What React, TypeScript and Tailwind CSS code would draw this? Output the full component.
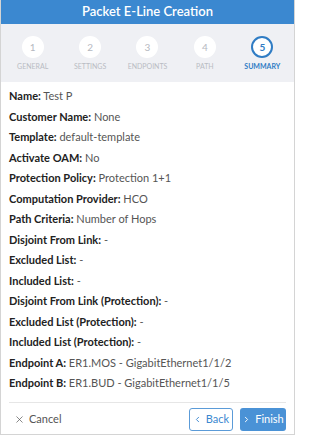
import { X, ChevronLeft, ChevronRight } from 'lucide-react'

const steps = ['General', 'Settings', 'Endpoints', 'Path', 'Summary']

const rows: [string, string][] = [
  ['Name:', 'Test P'],
  ['Customer Name:', 'None'],
  ['Template:', 'default-template'],
  ['Activate OAM:', 'No'],
  ['Protection Policy:', 'Protection 1+1'],
  ['Computation Provider:', 'HCO'],
  ['Path Criteria:', 'Number of Hops'],
  ['Disjoint From Link:', '-'],
  ['Excluded List:', '-'],
  ['Included List:', '-'],
  ['Disjoint From Link (Protection):', '-'],
  ['Excluded List (Protection):', '-'],
  ['Included List (Protection):', '-'],
  ['Endpoint A:', 'ER1.MOS - GigabitEthernet1/1/2'],
  ['Endpoint B:', 'ER1.BUD - GigabitEthernet1/1/5'],
]

export default function App() {
  return (
    <div
      className="flex h-[435px] w-[295px] flex-col border-x border-b border-[#d4d4d4] bg-white text-[#333]"
      style={{ fontFamily: 'Lato, "Open Sans", sans-serif' }}
    >
      <header className="flex h-[24px] shrink-0 items-center justify-center bg-[#3b88d0] text-[13px] font-semibold text-white">
        Packet E-Line Creation
      </header>

      <div className="grid h-[58px] shrink-0 grid-cols-5 bg-[#eff0f4] px-[3px] pt-[12px]">
        {steps.map((s, i) => {
          const active = i === steps.length - 1
          return (
            <div key={s} className="flex flex-col items-center">
              <div
                className={
                  active
                    ? 'flex h-[22px] w-[22px] items-center justify-center rounded-full border-2 border-[#2f7cc4] bg-white text-[10px] font-bold text-[#2f7cc4]'
                    : 'flex h-[22px] w-[22px] items-center justify-center rounded-full bg-white text-[10px] text-[#b5b8bf]'
                }
              >
                {i + 1}
              </div>
              <div
                className={
                  active
                    ? 'mt-[3px] text-[7px] font-bold uppercase text-[#2f7cc4]'
                    : 'mt-[3px] text-[7px] uppercase text-[#b9bcc3]'
                }
              >
                {s}
              </div>
            </div>
          )
        })}
      </div>

      <div className="flex flex-1 flex-col px-[8px] pt-[4px]">
        {rows.map(([k, v]) => (
          <div key={k} className="h-[20.5px] text-[11px] leading-[20.5px]">
            <span className="font-bold text-[#222]">{k}</span>{' '}
            <span className="text-[#555]">{v}</span>
          </div>
        ))}
      </div>

      <div className="mx-[8px] flex h-[32px] shrink-0 items-center justify-between border-t border-[#e6e6e6] pt-[2px]">
        <button className="flex items-center gap-[4px] pl-[5px] text-[11px] text-[#555]">
          <X size={11} strokeWidth={1.5} />
          Cancel
        </button>
        <div className="flex gap-[7px]">
          <button className="flex h-[23px] w-[44px] items-center justify-center gap-[4px] rounded-[3px] border border-[#5b9bd8] bg-white text-[11px] text-[#3b88d0]">
            <ChevronLeft size={9} strokeWidth={2.5} />
            Back
          </button>
          <button className="flex h-[23px] w-[46px] items-center justify-center gap-[4px] rounded-[3px] bg-[#4a92d6] text-[11px] text-white">
            <ChevronRight size={9} strokeWidth={2.5} />
            Finish
          </button>
        </div>
      </div>
    </div>
  )
}
